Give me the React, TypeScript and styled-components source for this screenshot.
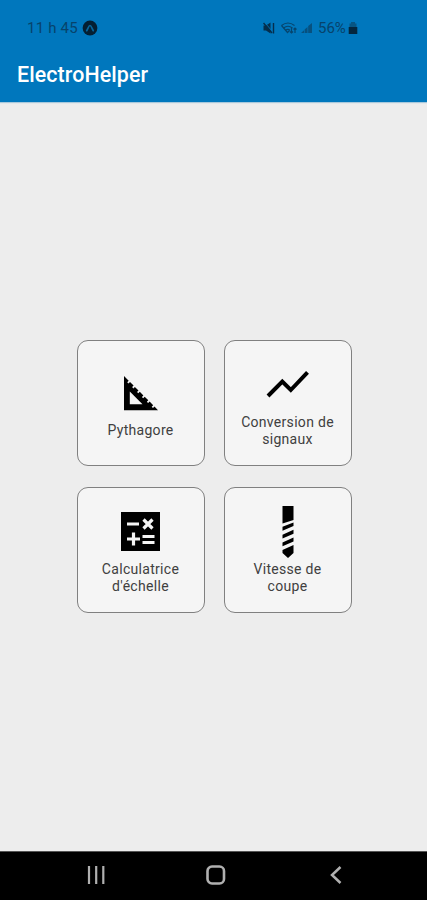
import React from "react";
import styled, { createGlobalStyle } from "styled-components";

const GlobalStyle = createGlobalStyle`
  * { box-sizing: border-box; }
  body { margin: 0; font-family: Roboto, sans-serif; background: #ededed; }
`;

const Screen = styled.div`
  width: 427px;
  height: 900px;
  display: flex;
  flex-direction: column;
  overflow: hidden;
`;

const Header = styled.header`
  height: 102px;
  flex: none;
  background: #0077bd;
  box-shadow: 0 1px 1px #a9c9dc;
`;

const StatusBar = styled.div`
  height: 55px;
  padding: 0 69px 0 27px;
  display: flex;
  align-items: center;
  justify-content: space-between;
  color: #07436b;
  font-size: 15px;
  line-height: 18px;
`;

const StatusGroup = styled.div`
  display: flex;
  align-items: center;
  height: 18px;
`;

const Clock = styled.span`
  width: 55px;
  letter-spacing: 0.2px;
  white-space: nowrap;
`;

const Battery = styled.span`
  width: 30px;
`;

const Title = styled.h1`
  margin: 0;
  padding-left: 17px;
  color: #fff;
  font-size: 21.4px;
  font-weight: 500;
  line-height: 40px;
  letter-spacing: 0.1px;
`;

const Main = styled.main`
  flex: 1;
  padding: 238px 0 0 77px;
`;

const Grid = styled.div`
  display: grid;
  grid-template-columns: 128px 128px;
  grid-auto-rows: 126px;
  gap: 21px 19px;
`;

const Card = styled.button<{ $top: number }>`
  display: flex;
  flex-direction: column;
  align-items: center;
  justify-content: flex-start;
  padding: ${(p) => p.$top}px 1px 0 0;
  border: 1px solid #808080;
  border-radius: 11px;
  background: #f5f5f5;
  font-family: inherit;
  color: #404040;
`;

const IconBox = styled.span<{ $height: number }>`
  display: flex;
  height: ${(p) => p.$height}px;
  flex: none;
  svg { display: block; }
`;

const Label = styled.span`
  font-size: 14px;
  line-height: 17px;
  letter-spacing: 0.3px;
  text-align: center;
  white-space: pre-line;
`;

const NavBar = styled.nav`
  height: 49px;
  flex: none;
  display: grid;
  grid-template-columns: 120px 120px 120px;
  justify-items: center;
  padding: 13px 0 0 36px;
  background: #000;
  border-top: 1px solid #555;
`;

const ExpoIcon = () => (
  <svg width="16" height="16" viewBox="0 0 16 16">
    <circle cx="8" cy="8" r="7.4" fill="#041f33" />
    <path d="M4.700 10.700C6 8.600 6.800 5.500 8 5.500s2 3.100 3.300 5.200" fill="none" stroke="#07659c" strokeWidth="1.700" strokeLinecap="round" />
  </svg>
);

const SignalIcons = () => (
  <svg width="55" height="16" viewBox="0 0 55 16">
    <path d="M.5 5.500H3L7.500 2.500v11L3 10.500H.5z" fill="#052e4c" />
    <path d="M1.500 2.500l8 9" stroke="#0077bd" strokeWidth="1" />
    <path d="M.5 3l8.500 10M10.500 3v10.500" stroke="#052e4c" strokeWidth="1.400" />
    <g fill="none" stroke="#06456d" strokeWidth="1.200">
      <path d="M18.500 5.500Q25 .500 31.500 5.500M20.500 8q4.500-3.500 9 0M22.500 10.300q2.500-2 4.500 0" />
      <path d="M18.500 5.500l6 7 2-2" />
      <path d="M28.500 8v5m-1.500-1.500l1.500 1.500 1.500-1.500M32 13V8m-1.500 1.500L32 8l1.500 1.500" />
    </g>
    <path d="M38 13l3-2.700V13zM41.600 13V9.500L44.500 7v6zM45.200 13V6L49 3v10z" fill="#07517f" />
  </svg>
);

const BatteryIcon = () => (
  <svg width="10" height="14" viewBox="0 0 10 14">
    <path d="M3 1h4v1.500h1.500V7h-7V2.500H3z" fill="#075583" />
    <path d="M.7 6h8.600v7H.7z" fill="#04263e" />
  </svg>
);

const SetSquareIcon = () => (
  <svg width="34" height="35" viewBox="0 0 34 35">
    <path
      fillRule="evenodd"
      fill="#000"
      d="M0 0L4.700 4.700 3.200 6.200 4.500 7.500 6 6 9.600 9.600 8.100 11.100 9.400 12.400 10.900 10.900 14.500 14.500 13 16 14.300 17.300 15.800 15.800 19.400 19.400 17.900 20.900 19.200 22.200 20.700 20.700 24.300 24.300 22.800 25.800 24.100 27.100 25.600 25.600 29.200 29.200 27.700 30.700 29 32 30.500 30.500 34 34.300H0zM5.800 15.500v12.700H18.500z"
    />
  </svg>
);

const LineIcon = () => (
  <svg width="44" height="30" viewBox="0 0 44 30">
    <path d="M2 26L16.300 11.500 24.800 20 41.500 2.300" fill="none" stroke="#000" strokeWidth="4" />
  </svg>
);

const CalculatorIcon = () => (
  <svg width="39" height="39" viewBox="0 0 39 39">
    <path d="M0 0h39v39H0z" fill="#000" />
    <path
      d="M6 12h12M22.500 7.500l9 9m0-9l-9 9M6 27h13M12.500 20.500v13M21.500 24.500h12M21.500 30.500h12"
      fill="none"
      stroke="#f5f5f5"
      strokeWidth="3.200"
    />
  </svg>
);

const DrillIcon = () => (
  <svg width="12" height="52" viewBox="0 0 12 52" fill="#000">
    <path d="M.5 0h11v14L.5 17.500zM.5 20.700l11-4.200v3.500L.5 24.700zM.5 28.700l11-5v4L.5 32.500zM.5 36.600l11-5v4L.5 40.300zM.5 44l11-5v8L6 52 .5 47z" />
  </svg>
);

const RecentsIcon = () => (
  <svg width="18" height="20" viewBox="0 0 18 20">
    <path d="M2 1v18M9.200 1v18M16.300 1v18" stroke="#b0b0b0" strokeWidth="2.200" />
  </svg>
);

const HomeIcon = () => (
  <svg width="20" height="20" viewBox="0 0 20 20">
    <rect x="1.500" y="1.500" width="16.500" height="17" rx="4.500" fill="none" stroke="#b0b0b0" strokeWidth="2.600" />
  </svg>
);

const BackIcon = () => (
  <svg width="12" height="20" viewBox="0 0 12 20">
    <path d="M10.500 2L2 10l8.500 8" fill="none" stroke="#b0b0b0" strokeWidth="2.500" />
  </svg>
);

const tools = [
  { label: "Pythagore", icon: <SetSquareIcon />, top: 35, height: 46 },
  { label: "Conversion de\nsignaux", icon: <LineIcon />, top: 29, height: 44 },
  { label: "Calculatrice\nd'échelle", icon: <CalculatorIcon />, top: 24, height: 49 },
  { label: "Vitesse de\ncoupe", icon: <DrillIcon />, top: 18, height: 55 },
];

export default function App() {
  return (
    <>
      <GlobalStyle />
      <Screen>
        <Header>
          <StatusBar>
            <StatusGroup>
              <Clock>11 h 45</Clock>
              <ExpoIcon />
            </StatusGroup>
            <StatusGroup>
              <SignalIcons />
              <Battery>56%</Battery>
              <BatteryIcon />
            </StatusGroup>
          </StatusBar>
          <Title>ElectroHelper</Title>
        </Header>
        <Main>
          <Grid>
            {tools.map((tool) => (
              <Card key={tool.label} $top={tool.top}>
                <IconBox $height={tool.height}>{tool.icon}</IconBox>
                <Label>{tool.label}</Label>
              </Card>
            ))}
          </Grid>
        </Main>
        <NavBar>
          <RecentsIcon />
          <HomeIcon />
          <BackIcon />
        </NavBar>
      </Screen>
    </>
  );
}
